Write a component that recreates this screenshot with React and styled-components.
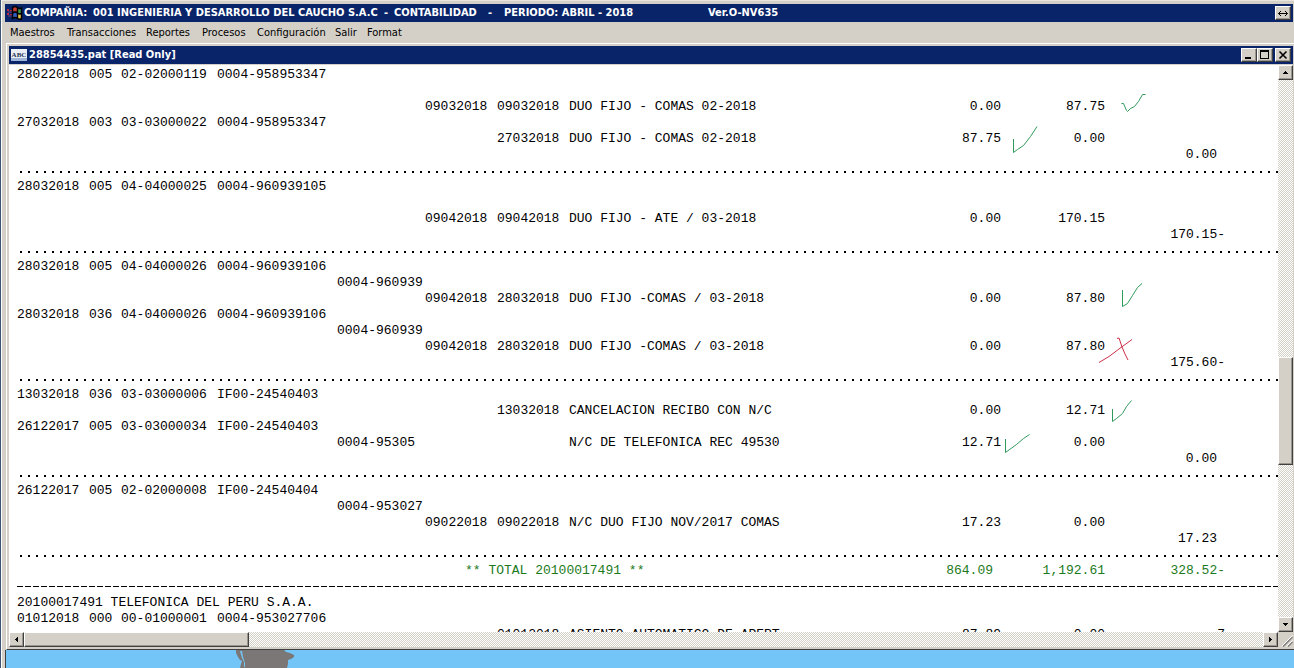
import React from "react";
import styled, { createGlobalStyle, css } from "styled-components";

const Global = createGlobalStyle`
  * { box-sizing: border-box; }
  html, body, #root { height: 100%; }
  body { margin: 0; overflow: hidden; background: #3c5372; font-family: "DejaVu Sans Condensed", "DejaVu Sans", sans-serif; font-size: 11px; }
`;

const face = "#d4d0c8";
const navy = "#0a246a";

const raised = css`
  background: ${face};
  border: 1px solid;
  border-color: #fff #404040 #404040 #fff;
  box-shadow: inset -1px -1px 0 #9a968e;
`;

const Frame = styled.div`
  display: flex;
  flex-direction: column;
  height: 100vh;
  margin-left: 1px;
  padding: 2px 0 0 2px;
  background: ${face};
  border-left: 1px solid #fff;
  border-top: 1px solid #e8e4e0;
`;

const TitleBar = styled.header`
  display: flex;
  align-items: center;
  flex: none;
  height: 18px;
  margin: 1px 1px 0;
  padding: 0 2px;
  background: ${navy};
  color: #fff;
  font-weight: bold;
  white-space: pre;
`;

const TitleIcon = styled.svg`
  flex: none;
  width: 16px;
  height: 16px;
`;

const TitleParts = styled.h1`
  display: grid;
  grid-template-columns: 69px 291px 10px 94px 16px 204px auto;
  margin: 0 auto 0 1px;
  font-size: 11px;
  line-height: 18px;
`;

const DocTitle = styled.h2`
  margin: 0 auto 0 2px;
  font-size: 11px;
  line-height: 18px;
`;

const Menu = styled.nav`
  display: flex;
  flex: none;
  height: 21px;
  padding-left: 6px;
`;

const MenuButton = styled.button`
  padding: 0;
  border: 0;
  background: none;
  color: #000;
  font: inherit;
  line-height: 21px;
  text-align: left;
  width: ${(p) => p.$width}px;
`;

const Caption = styled.button`
  ${raised}
  display: grid;
  place-items: center;
  flex: none;
  width: 16px;
  height: 14px;
  padding: 0;
  margin-left: ${(p) => (p.$apart ? 2 : 0)}px;
`;

const Document = styled.main`
  display: flex;
  flex-direction: column;
  flex: 1;
  min-height: 0;
  margin-left: 2px;
  padding: 1px 0 2px 1px;
  border-top: 1px solid #fff;
  border-left: 1px solid #fff;
  border-bottom: 1px solid #404040;
`;

const View = styled.div`
  display: grid;
  grid-template-columns: minmax(0, 1fr) 15px;
  grid-template-rows: minmax(0, 1fr) 15px;
  flex: 1;
  min-height: 0;
  margin: 1px 1px 0;
`;

const Paper = styled.div`
  position: relative;
  overflow: hidden;
  padding: 2px 0 0 8px;
  background: #fff;
`;

const Ledger = styled.table`
  width: 100%;
  table-layout: fixed;
  border-collapse: collapse;
  font: 13px/16px "Liberation Mono", monospace;
  color: #000;
`;

const Col = styled.col`
  width: ${(p) => (p.$chars ? `${p.$chars * 8}px` : "auto")};
`;

const Row = styled.tr`
  height: 16px;
  color: ${(p) => (p.$total ? "#1c7a1c" : "inherit")};
`;

const Cell = styled.td`
  height: 16px;
  padding: 0;
  white-space: pre;
`;

const TotalLabel = styled(Cell)`
  padding-left: 40px;
`;

const Amount = styled(Cell)`
  text-align: right;
  padding-right: ${(p) => (p.$inset ? 8 : 0)}px;
`;

const Rule = styled.div`
  height: 16px;
  background: ${(p) =>
    p.$dashed
      ? "repeating-linear-gradient(90deg, #000 0 6px, transparent 6px 8px) 0 7px / 100% 1px no-repeat"
      : "repeating-linear-gradient(90deg, transparent 0 3px, #000 3px 5px, transparent 5px 8px) 0 8px / 100% 2px no-repeat"};
`;

const Marks = styled.svg`
  position: absolute;
  top: 0;
  left: 0;
  width: 1269px;
  height: 567px;
  pointer-events: none;
  fill: none;
  stroke: #2f9a5c;
`;

const Track = styled.div`
  display: flex;
  flex-direction: ${(p) => (p.$vertical ? "column" : "row")};
  background: repeating-conic-gradient(#fff 0 25%, #d4d0c8 0 50%) 0 0 / 2px 2px;
`;

const ScrollButton = styled.button`
  ${raised}
  display: grid;
  place-items: center;
  flex: none;
  width: 15px;
  height: 15px;
  padding: 0;
`;

const Space = styled.div`
  flex: ${(p) => p.$grow} 1 0;
`;

const Thumb = styled.div`
  ${raised}
  flex: ${(p) => p.$grow} 1 0;
`;

const Grip = styled.svg`
  width: 15px;
  height: 15px;
  background: ${face};
`;

const Desktop = styled.footer`
  flex: none;
  height: 18px;
  margin-left: 1px;
  padding-left: 230px;
  border-left: 1px solid #404040;
  background: #72c5f6;
`;

const entries = [
  { k: ["28022018", "005", "02-02000119", "0004-958953347"] },
  {},
  { d: ["09032018", "09032018", "DUO FIJO - COMAS 02-2018"], a: ["0.00", "87.75"] },
  { k: ["27032018", "003", "03-03000022", "0004-958953347"] },
  { d: ["", "27032018", "DUO FIJO - COMAS 02-2018"], a: ["87.75", "0.00"] },
  { b: "0.00" },
  { rule: "dots" },
  { k: ["28032018", "005", "04-04000025", "0004-960939105"] },
  {},
  { d: ["09042018", "09042018", "DUO FIJO - ATE / 03-2018"], a: ["0.00", "170.15"] },
  { b: "170.15-" },
  { rule: "dots" },
  { k: ["28032018", "005", "04-04000026", "0004-960939106"] },
  { r: "0004-960939" },
  { d: ["09042018", "28032018", "DUO FIJO -COMAS / 03-2018"], a: ["0.00", "87.80"] },
  { k: ["28032018", "036", "04-04000026", "0004-960939106"] },
  { r: "0004-960939" },
  { d: ["09042018", "28032018", "DUO FIJO -COMAS / 03-2018"], a: ["0.00", "87.80"] },
  { b: "175.60-" },
  { rule: "dots" },
  { k: ["13032018", "036", "03-03000006", "IF00-24540403"] },
  { d: ["", "13032018", "CANCELACION RECIBO CON N/C"], a: ["0.00", "12.71"] },
  { k: ["26122017", "005", "03-03000034", "IF00-24540403"] },
  { r: "0004-95305", d: ["", "", "N/C DE TELEFONICA REC 49530"], a: ["12.71", "0.00"] },
  { b: "0.00" },
  { rule: "dots" },
  { k: ["26122017", "005", "02-02000008", "IF00-24540404"] },
  { r: "0004-953027" },
  { d: ["09022018", "09022018", "N/C DUO FIJO NOV/2017 COMAS"], a: ["17.23", "0.00"] },
  { b: "17.23" },
  { rule: "dots" },
  { total: "** TOTAL 20100017491 **", a: ["864.09", "1,192.61"], b: "328.52-" },
  { rule: "dashes" },
  { heading: "20100017491 TELEFONICA DEL PERU S.A.A." },
  { k: ["01012018", "000", "00-01000001", "0004-953027706"] },
  { d: ["", "01012018", "ASIENTO AUTOMATICO DE APERT"], a: ["87.89", "0.00"], b: "7", flush: true },
];

// Column widths in characters; the last column takes what is left.
const columns = [9, 4, 12, 15, 11, 9, 9, 29, 25, 13, 15, 0];

function Entry({ e }) {
  if (e.rule) {
    return (
      <Row>
        <Cell colSpan={12}><Rule $dashed={e.rule === "dashes"} /></Cell>
      </Row>
    );
  }
  if (e.heading) {
    return <Row><Cell colSpan={12}>{e.heading}</Cell></Row>;
  }
  const k = e.k || ["", "", "", ""];
  const d = e.d || ["", "", ""];
  const a = e.a || ["", ""];
  const b = e.b || "";
  return (
    <Row $total={!!e.total}>
      {e.total ? (
        <>
          <Cell colSpan={5} />
          <TotalLabel colSpan={3}>{e.total}</TotalLabel>
        </>
      ) : (
        <>
          {k.map((t, i) => <Cell key={i}>{t}</Cell>)}
          <Cell>{e.r}</Cell>
          {d.map((t, i) => <Cell key={i}>{t}</Cell>)}
        </>
      )}
      <Amount $inset={!!e.total}>{a[0]}</Amount>
      <Amount>{a[1]}</Amount>
      <Amount $inset={!e.flush && !b.endsWith("-")}>{b}</Amount>
      <Cell />
    </Row>
  );
}

const menu = [["Maestros", 57], ["Transacciones", 79], ["Reportes", 56], ["Procesos", 55], ["Configuración", 78], ["Salir", 32], ["Format", 40]];

const arrows = { up: "M4 8h5v-1h-1v-1h-1v-1h-1v1h-1v1h-1z", down: "M4 5h5v1h-1v1h-1v1h-1v-1h-1v-1h-1z", left: "M8 4v5h-1v-1h-1v-1h-1v-1h1v-1h1v-1z", right: "M5 4v5h1v-1h1v-1h1v-1h-1v-1h-1v-1z" };

const Arrow = ({ to }) => (
  <ScrollButton aria-label={`Scroll ${to}`}>
    <svg width="13" height="13" viewBox="0 0 13 13"><path d={arrows[to]} /></svg>
  </ScrollButton>
);

export default function App() {
  return (
    <>
      <Global />
      <Frame>
        <TitleBar>
          <TitleIcon viewBox="0 0 16 16">
            <path d="M0 4h2v2H0zM3 5h2v2H3zM0 8h2v2H0zM3 9h2v2H3z" fill="#c02840" />
            <path d="M1 6h4v2H1zM1 10h4v2H1z" fill="#40306e" />
            <path d="M6 3q2-2 4 0v4q-2-1-4 0z" fill="#c43a32" />
            <path d="M11 4q2 1 3 0v4q-2 1-3 0z" fill="#3c9a48" />
            <path d="M6 9q2-2 4 0v4q-2-1-4 0z" fill="#315bc0" />
            <path d="M11 9q2 1 3 0v4q-2 1-3 0z" fill="#e5c53b" />
            <path d="M5.500 2.500q2.500-2 5 0 2 1.500 4 0.500v11q-2 1-4-.5-2.500-2-5 0zM5.500 8q2.500-2 5 0 2 1.500 4 .5M10.500 2.500v11" fill="none" stroke="#000" strokeWidth="1.400" />
          </TitleIcon>
          <TitleParts>
            <span>COMPAÑIA:</span>
            <span>001 INGENIERIA Y DESARROLLO DEL CAUCHO S.A.C</span>
            <span>-</span>
            <span>CONTABILIDAD</span>
            <span>-</span>
            <span>PERIODO: ABRIL - 2018</span>
            <span>Ver.O-NV635</span>
          </TitleParts>
          <Caption aria-label="Resize">
            <svg width="12" height="10" viewBox="0 0 12 10"><path d="M1.500 5.500h9M4 3 1.500 5.500 4 8M8 3 10.500 5.500 8 8" fill="none" stroke="#000" /></svg>
          </Caption>
        </TitleBar>
        <Menu>
          {menu.map(([name, width]) => <MenuButton key={name} $width={width}>{name}</MenuButton>)}
        </Menu>
        <Document>
          <TitleBar>
            <TitleIcon viewBox="0 0 16 16">
              <path d="M0 2h16v12H0z" fill="#e9eef6" />
              <path d="M0 11h16v3H0z" fill="#9db4d8" />
              <text x="8" y="10" textAnchor="middle" fontFamily="Liberation Serif" fontSize="7" fontWeight="bold" fill="#26334f">ABC</text>
            </TitleIcon>
            <DocTitle>28854435.pat [Read Only]</DocTitle>
            <Caption aria-label="Minimize">
              <svg width="12" height="10" viewBox="0 0 12 10"><path d="M2 7h6v2H2z" /></svg>
            </Caption>
            <Caption aria-label="Maximize">
              <svg width="12" height="10" viewBox="0 0 12 10"><path d="M1 0h9v9H1zM2 2v6h7V2z" fillRule="evenodd" /></svg>
            </Caption>
            <Caption $apart aria-label="Close">
              <svg width="12" height="10" viewBox="0 0 12 10"><path d="M2.500 1.500l7 7M9.500 1.500l-7 7" stroke="#000" strokeWidth="1.600" /></svg>
            </Caption>
          </TitleBar>
          <View>
            <Paper>
              <Ledger>
                <colgroup>{columns.map((c, i) => <Col key={i} $chars={c} />)}</colgroup>
                <tbody>{entries.map((e, i) => <Entry key={i} e={e} />)}</tbody>
              </Ledger>
              <Marks viewBox="9 65 1269 567">
                <path d="M1121.500 103.500h2l3 7 1 1 3-3 4-2 4-5 4-7h3" />
                <path d="M1013.500 139v13.500l4-3 6-4 7-9 6.500-10" />
                <path d="M1122.500 290v16.500l5-3 5-8 5-8 4.500-4" />
                <path d="M1112.500 409v12.500l4-3 6-5 4-7 5-6" />
                <path d="M1005.500 439v13.500l11-8 7-6 6-4" />
                <path d="M1117 338.500l2-.5 3 9 3 7 3 6M1099 362.500l10-6 12-9 11-8" stroke="#cc3048" />
              </Marks>
            </Paper>
            <Track $vertical>
              <Arrow to="up" />
              <Space $grow={278} />
              <Thumb $grow={106} />
              <Space $grow={153} />
              <Arrow to="down" />
            </Track>
            <Track>
              <Arrow to="left" />
              <Thumb $grow={224} />
              <Space $grow={1017} />
              <Arrow to="right" />
            </Track>
            <Grip viewBox="0 0 15 15">
              <path d="M5 14.500 14.500 5M10 14.500 14.500 10" stroke="#808080" strokeWidth="1.500" />
              <path d="M3.500 14.500 14.500 3.500M8.500 14.500 14.500 8.500" stroke="#fff" />
            </Grip>
          </View>
        </Document>
        <Desktop>
          <svg width="60" height="18" viewBox="0 0 60 18">
            <path d="M0 0h48l2 2 4 1 4 2v2l-3 2-3 1v4l-1 4H4l1-4 1-3-2-1-2-3-2-4zM4 1l2 7 2 4v5h1v-4l-2-6-1-6z" fillRule="evenodd" fill="#7b7777" />
          </svg>
        </Desktop>
      </Frame>
    </>
  );
}
